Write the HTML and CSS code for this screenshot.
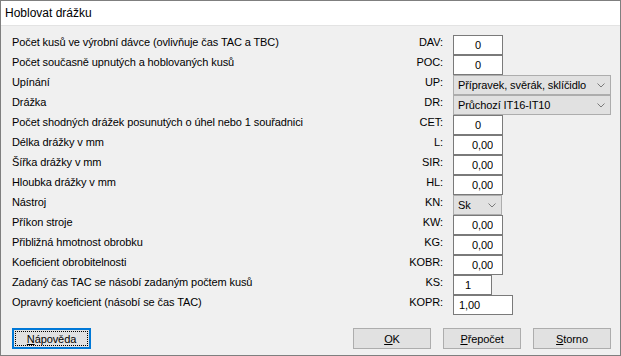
FILE: index.html
```
<!DOCTYPE html>
<html lang="cs">
<head>
    <meta charset="UTF-8">
    <meta name="viewport" content="width=device-width, initial-scale=1.0">
    <title>Hoblovat drážku</title>
    <link rel="stylesheet" href="styles.css">
</head>
<body>
    <div class="dialog">
        <div class="titlebar">Hoblovat drážku</div>

        <div class="client">
            <div class="fields">
                <span class="desc">Počet kusů ve výrobní dávce (ovlivňuje čas TAC a TBC)</span>
                <span class="code">DAV:</span>
                <input class="edit w50 center" value="0">

                <span class="desc">Počet současně upnutých a hoblovaných kusů</span>
                <span class="code">POC:</span>
                <input class="edit w50 center" value="0">

                <span class="desc">Upínání</span>
                <span class="code">UP:</span>
                <div class="combo w158">
                    <span>Přípravek, svěrák, sklíčidlo</span>
                    <svg class="chevron" width="8" height="5" viewBox="0 0 8 5"><polyline points="0.5,0.5 4,4 7.5,0.5" /></svg>
                </div>

                <span class="desc">Drážka</span>
                <span class="code">DR:</span>
                <div class="combo w158">
                    <span>Průchozí IT16-IT10</span>
                    <svg class="chevron" width="8" height="5" viewBox="0 0 8 5"><polyline points="0.5,0.5 4,4 7.5,0.5" /></svg>
                </div>

                <span class="desc">Počet shodných drážek posunutých o úhel nebo 1 souřadnici</span>
                <span class="code">CET:</span>
                <input class="edit w50 center" value="0">

                <span class="desc">Délka drážky v mm</span>
                <span class="code">L:</span>
                <input class="edit w50 right" value="0,00">

                <span class="desc">Šířka drážky v mm</span>
                <span class="code">SIR:</span>
                <input class="edit w50 right" value="0,00">

                <span class="desc">Hloubka drážky v mm</span>
                <span class="code">HL:</span>
                <input class="edit w50 right" value="0,00">

                <span class="desc">Nástroj</span>
                <span class="code">KN:</span>
                <div class="combo w49">
                    <span>Sk</span>
                    <svg class="chevron" width="8" height="5" viewBox="0 0 8 5"><polyline points="0.5,0.5 4,4 7.5,0.5" /></svg>
                </div>

                <span class="desc">Příkon stroje</span>
                <span class="code">KW:</span>
                <input class="edit w50 right" value="0,00">

                <span class="desc">Přibližná hmotnost obrobku</span>
                <span class="code">KG:</span>
                <input class="edit w50 right" value="0,00">

                <span class="desc">Koeficient obrobitelnosti</span>
                <span class="code">KOBR:</span>
                <input class="edit w50 right" value="0,00">

                <span class="desc">Zadaný čas TAC se násobí zadaným počtem kusů</span>
                <span class="code">KS:</span>
                <input class="edit w38 left-wide" value="1">

                <span class="desc">Opravný koeficient (násobí se čas TAC)</span>
                <span class="code">KOPR:</span>
                <input class="edit w59 left" value="1,00">
            </div>

            <div class="buttons">
                <button class="btn btn-focus"><u>N</u>ápověda</button>
                <div class="btn-group">
                    <button class="btn"><u>O</u>K</button>
                    <button class="btn"><u>P</u>řepočet</button>
                    <button class="btn"><u>S</u>torno</button>
                </div>
            </div>
        </div>
    </div>
</body>
</html>
```

FILE: styles.css
```
* {
    margin: 0;
    padding: 0;
    box-sizing: border-box;
}

body {
    font-family: 'Liberation Sans', Arial, sans-serif;
    font-size: 11px;
    letter-spacing: -0.1px;
    color: #000;
    background: #f0f0f0;
}

.dialog {
    width: 621px;
    height: 356px;
    border: 1px solid #7f7f7f;
    background: #f0f0f0;
    display: flex;
    flex-direction: column;
}

.titlebar {
    height: 25px;
    background: #fff;
    font-size: 12px;
    letter-spacing: 0;
    line-height: 25px;
    padding-left: 4px;
    border-bottom: 1px solid #e3e3e3;
}

.client {
    flex: 1;
    display: flex;
    flex-direction: column;
    padding: 9px 9px 0 11px;
}

.fields {
    display: grid;
    grid-template-columns: 1fr auto 158px;
    grid-auto-rows: 20px;
    column-gap: 10px;
}

.desc,
.code {
    line-height: 14px;
    white-space: nowrap;
}

.code {
    text-align: right;
}

/* edit boxes */
.edit {
    height: 20px;
    border: 1px solid #7a7a7a;
    background: #fff;
    font-family: 'Liberation Sans', Arial, sans-serif;
    font-size: 11px;
    letter-spacing: -0.1px;
    color: #000;
    outline: none;
    justify-self: start;
}

.center {
    text-align: center;
}

.right {
    text-align: right;
    padding-right: 9px;
}

.left {
    text-align: left;
    padding-left: 5px;
}

.left-wide {
    text-align: left;
    padding-left: 11px;
}

.w38 { width: 39px; }
.w49 { width: 49px; }
.w50 { width: 50px; }
.w59 { width: 60px; }
.w158 { width: 158px; }

/* combo boxes */
.combo {
    height: 20px;
    border: 1px solid #adadad;
    background: #e1e1e1;
    display: flex;
    align-items: center;
    justify-content: space-between;
    padding: 0 5px 0 4px;
    justify-self: start;
    white-space: nowrap;
}

.chevron polyline {
    fill: none;
    stroke: #7a7a7a;
    stroke-width: 1;
}

/* buttons */
.buttons {
    display: flex;
    justify-content: space-between;
    margin-top: 13px;
}

.btn-group {
    display: flex;
    gap: 12px;
}

.btn {
    width: 78px;
    height: 21px;
    border: 1px solid #adadad;
    background: #e1e1e1;
    font-family: 'Liberation Sans', Arial, sans-serif;
    font-size: 11px;
    letter-spacing: -0.1px;
    color: #000;
}

.btn u {
    text-decoration-thickness: 1px;
    text-underline-offset: 1px;
}

.btn-focus {
    width: 79px;
    border: 2px solid #0078d7;
    outline: 1px dotted #000;
    outline-offset: -4px;
}
```
